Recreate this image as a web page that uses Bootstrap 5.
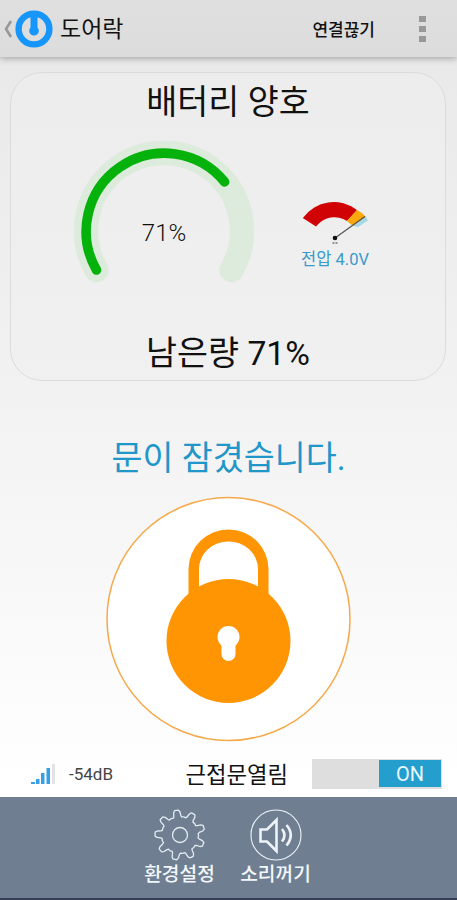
<!DOCTYPE html>
<html lang="ko">
<head>
<meta charset="utf-8">
<meta name="viewport" content="width=device-width, initial-scale=1">
<title>도어락</title>
<link href="https://cdn.jsdelivr.net/npm/bootstrap@5.3.0/dist/css/bootstrap.min.css" rel="stylesheet">
<style>
body{font-family:Roboto,"Noto Sans CJK KR",sans-serif;color:#111;line-height:1;white-space:nowrap}
svg{display:block;flex:none}
.screen{height:900px;background:linear-gradient(#e8e8e8,#eee 250px,#f3f3f3 430px,#fff 790px)}
.topbar{height:57px;background:linear-gradient(#dfdfdf,#dcdcdc);box-shadow:0 1px 7px rgba(0,0,0,.35);padding-left:3px;padding-right:31px}
.topbar-title{font-size:23px;margin-left:7px;line-height:30px;padding-top:2px}
.topbar-link{font-size:17px;font-weight:500;line-height:24px;margin-right:44px;padding-top:2px}
.dots i{display:block;width:7px;height:6px;background:#999}
.battery{height:309px;margin:15px 11px 0 10px;border:1px solid #dcdcdc;border-radius:32px;background:rgba(240,240,240,.5)}
.heading{font-size:33.7px;line-height:48px;color:#111;padding-top:6px}
.light{font-weight:300}
.meters{height:197px}
.gauge{width:180px;height:150px;margin-left:63px;margin-top:-19px}
.gauge-value{font-size:24px;padding-top:34px}
.voltage{width:80px;margin-left:41px;margin-top:16px}
.volt-label{font-size:16.5px;line-height:20px;color:#3a9acb;padding-top:2px}
.door-state{font-size:33.7px;line-height:48px;margin-top:54px;color:#2196c9}
.lock-wrap{margin-top:13px}
.status-row{height:56px;padding-left:30px;padding-right:15px;margin-bottom:-1px}
.signal{font-size:17px;color:#444;margin-left:14px;padding-top:8px}
.near{font-size:22.3px;line-height:30px;padding-top:9px}
.toggle{width:130px;height:30px;background:#dedede;padding:1px;margin-top:7px}
.toggle-on{width:62px;height:27px;background:#249fcd;color:#eaf8ff;font-size:20px;padding-top:2px}
.dock{height:103px;background:#6f7f91;border-bottom:2px solid #343d53;padding-top:12px;padding-right:2px}
.dock-item{width:96px;color:#f2f7fc;font-size:19.2px;font-weight:500;line-height:28px}
</style>
<script src="https://cdn.jsdelivr.net/npm/bootstrap@5.3.0/dist/js/bootstrap.bundle.min.js"></script>
</head>
<body>
<div class="screen d-flex flex-column overflow-hidden">
  <header class="topbar d-flex align-items-center flex-shrink-0">
    <svg width="12" height="20" viewBox="0 0 12 20"><path d="M8 2 3 10 8 18" fill="none" stroke="#999" stroke-width="2.6"/></svg>
    <svg width="38" height="38" viewBox="0 0 38 38"><circle cx="19" cy="19" r="15.400" fill="none" stroke="#1695fb" stroke-width="6.400"/><path d="M15.500 3h7v14.500a4.800 4.800 0 1 1-7 0z" fill="#1695fb"/></svg>
    <span class="topbar-title">도어락</span>
    <span class="topbar-link ms-auto">연결끊기</span>
    <span class="dots d-grid gap-1"><i></i><i></i><i></i></span>
  </header>

  <main class="flex-grow-1 d-flex flex-column">
    <section class="battery d-flex flex-column align-items-stretch flex-shrink-0 text-center">
      <div class="heading">배터리 양호</div>
      <div class="meters d-flex align-items-center">
        <div class="gauge position-relative d-flex align-items-center justify-content-center">
          <svg class="position-absolute top-0 start-0" width="180" height="150" viewBox="0 0 180 150" fill="none" stroke-linecap="round">
            <path d="M22.5 129A78 78 0 1 1 157.5 129" stroke="#ddebdd" stroke-width="24.5"/>
            <path d="M22.5 129A78 78 0 0 1 150.6 40.9" stroke="#05b20c" stroke-width="9.6"/>
          </svg>
          <span class="gauge-value light position-relative">71%</span>
        </div>
        <div class="voltage">
          <svg class="mx-auto" width="80" height="50" viewBox="0 0 80 50">
            <path d="M7.800 20A38 38 0 0 1 62 12L52 23A23 23 0 0 0 21 28.500z" fill="#d00205"/>
            <path d="M62 12Q68 15 71 19L58 28 52 23z" fill="#fba80d"/>
            <path d="M71 19L73 22.500 63 29 58 28z" fill="#a5d9e8"/>
            <path d="M40 40 70 18.500" stroke="#555" stroke-width="1.300"/>
            <circle cx="40" cy="40" r="2.300" fill="#111"/><path d="M37.500 45h5" stroke="#777" stroke-width="1.500" stroke-dasharray="2 1"/>
          </svg>
          <div class="volt-label">전압 4.0V</div>
        </div>
      </div>
      <div class="heading">남은량 71%</div>
    </section>

    <div class="door-state text-center">문이 잠겼습니다.</div>
    <div class="lock-wrap d-flex justify-content-center">
      <svg width="246" height="246" viewBox="0 0 246 246">
        <circle cx="122.500" cy="123" r="121.500" fill="#fff" stroke="#f5a94b" stroke-width="1.500"/>
        <path fill-rule="evenodd" d="M82.500 108V73A40 39.500 0 0 1 162.500 73V108zM93 108V73A29.500 27.500 0 0 1 152 73V108z" fill="#ff9502"/>
        <circle cx="122.500" cy="145" r="62" fill="#ff9502"/>
        <circle cx="122.500" cy="141" r="11" fill="#fff"/>
        <path d="M122.500 144v14" stroke="#fff" stroke-width="14" stroke-linecap="round"/>
      </svg>
    </div>
  </main>

  <div class="status-row d-flex align-items-center flex-shrink-0">
    <svg class="mt-2" width="25" height="22" viewBox="0 0 25 22"><path d="M1 19h4v2H1zM6 16h3.500v5H6zM11 10h3.500v11H11zM16.500 5H20v16h-3.500z" fill="#379fe6"/><path d="M22 1h3v20h-3z" fill="#e3e3e3"/></svg>
    <span class="signal">-54dB</span>
    <span class="near ms-auto">근접문열림</span>
    <div class="toggle d-flex justify-content-end ms-4"><div class="toggle-on d-flex align-items-center justify-content-center">ON</div></div>
  </div>

  <footer class="dock d-flex justify-content-center flex-shrink-0">
    <div class="dock-item d-flex flex-column align-items-center">
      <svg width="52" height="52" viewBox="-26 -26 52 52" fill="none" stroke="#e2eaf2" stroke-width="1.300" stroke-linejoin="round">
        <path id="gear"/>
        <circle r="7.500"/>
      </svg>
      <span>환경설정</span>
    </div>
    <div class="dock-item d-flex flex-column align-items-center">
      <svg width="52" height="52" viewBox="0 0 52 52" fill="none" stroke="#edf3f8">
        <circle cx="26" cy="26" r="25" stroke-width="1.100"/>
        <path d="M10.500 20.500h6.500l9.500-9.500v31l-9.500-9.500h-6.500z" stroke-width="2.600"/>
        <path d="M32 20q5 6 0 12.500M36.500 16q8.500 10 0 20.500" stroke-width="2.600"/>
      </svg>
      <span>소리꺼기</span>
    </div>
  </footer>
</div>
<script>
// Gear outline: nine teeth, each described by angle offset and radius.
const profile = [[-20,18.6],[-13,18.2],[-10.5,19.5],[-8,23],[-4.5,25],[4.5,25],[8,23],[10.5,19.5],[13,18.2]];
const points = [];
for (let tooth = 0; tooth < 9; tooth++) {
  for (const [offset, radius] of profile) {
    const a = (tooth * 40 - 8 + offset) * Math.PI / 180;
    points.push((Math.sin(a) * radius).toFixed(2) + ' ' + (-Math.cos(a) * radius).toFixed(2));
  }
}
document.getElementById('gear').setAttribute('d', 'M' + points.join('L') + 'Z');
</script>
</body>
</html>
